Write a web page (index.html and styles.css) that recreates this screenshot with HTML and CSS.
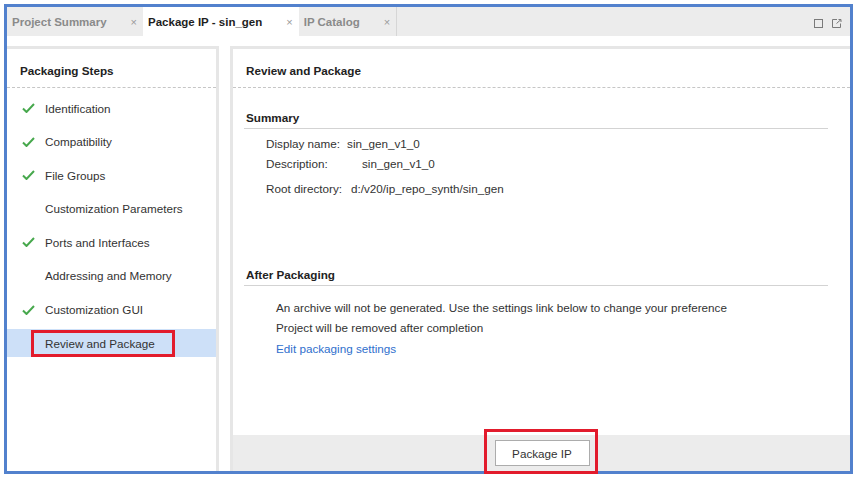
FILE: index.html
```html
<!DOCTYPE html>
<html lang="en">
<head>
    <meta charset="UTF-8">
    <meta name="viewport" content="width=device-width, initial-scale=1.0">
    <title>Package IP - sin_gen</title>
    <link rel="stylesheet" href="styles.css">
</head>
<body>
    <div class="frame">
        <div class="tabbar">
            <div class="tab">Project Summary<span class="close">×</span></div>
            <div class="tab active">Package IP - sin_gen<span class="close">×</span></div>
            <div class="tab last">IP Catalog<span class="close">×</span></div>
            <div class="tab-tools">
                <svg width="9" height="9" viewBox="0 0 9 9"><rect x="0.5" y="0.5" width="8" height="8" fill="none" stroke="#7a7a7a"/></svg>
                <svg width="10" height="9" viewBox="0 0 10 9"><path d="M5 0.5H0.5V8.5H8.5V4.5" fill="none" stroke="#7a7a7a"/><path d="M4.5 4.5L9 0.5M6.5 0.5H9V3" fill="none" stroke="#7a7a7a"/></svg>
            </div>
        </div>

        <div class="workspace">
            <div class="steps-panel">
                <div class="panel-title">Packaging Steps</div>
                <ul class="steps">
                    <li class="step"><span class="check"><svg width="13" height="10" viewBox="0 0 13 10"><polyline points="1,5.5 4.5,9 12,1" fill="none" stroke="#47a84d" stroke-width="2"/></svg></span><span>Identification</span></li>
                    <li class="step"><span class="check"><svg width="13" height="10" viewBox="0 0 13 10"><polyline points="1,5.5 4.5,9 12,1" fill="none" stroke="#47a84d" stroke-width="2"/></svg></span><span>Compatibility</span></li>
                    <li class="step"><span class="check"><svg width="13" height="10" viewBox="0 0 13 10"><polyline points="1,5.5 4.5,9 12,1" fill="none" stroke="#47a84d" stroke-width="2"/></svg></span><span>File Groups</span></li>
                    <li class="step"><span class="check"></span><span>Customization Parameters</span></li>
                    <li class="step"><span class="check"><svg width="13" height="10" viewBox="0 0 13 10"><polyline points="1,5.5 4.5,9 12,1" fill="none" stroke="#47a84d" stroke-width="2"/></svg></span><span>Ports and Interfaces</span></li>
                    <li class="step"><span class="check"></span><span>Addressing and Memory</span></li>
                    <li class="step"><span class="check"><svg width="13" height="10" viewBox="0 0 13 10"><polyline points="1,5.5 4.5,9 12,1" fill="none" stroke="#47a84d" stroke-width="2"/></svg></span><span>Customization GUI</span></li>
                    <li class="step current"><span class="check"></span><span class="callout step-callout">Review and Package</span></li>
                </ul>
            </div>

            <div class="review-panel">
                <div class="panel-title">Review and Package</div>
                <div class="review-body">
                    <div class="section">
                        <div class="section-title">Summary</div>
                        <div class="summary-rows">
                            <div class="row"><span>Display name:</span><span class="val-name">sin_gen_v1_0</span></div>
                            <div class="row"><span class="lbl-desc">Description:</span><span>sin_gen_v1_0</span></div>
                            <div class="row row-dir"><span>Root directory:</span><span class="val-dir">d:/v20/ip_repo_synth/sin_gen</span></div>
                        </div>
                    </div>
                    <div class="section after">
                        <div class="section-title">After Packaging</div>
                        <div class="after-rows">
                            <div class="row">An archive will not be generated. Use the settings link below to change your preference</div>
                            <div class="row">Project will be removed after completion</div>
                            <div class="row"><a href="#" class="link">Edit packaging settings</a></div>
                        </div>
                    </div>
                </div>
                <div class="review-footer">
                    <div class="callout btn-callout"><button class="btn">Package IP</button></div>
                </div>
            </div>
        </div>
    </div>
</body>
</html>
```

FILE: styles.css
```css
* {
    box-sizing: border-box;
}

body {
    margin: 0;
    font-family: 'Liberation Sans', Arial, sans-serif;
    font-size: 11.7px;
    color: #333;
    background: #fff;
}

.frame {
    margin: 4px 3px 0 4px;
    height: 470px;
    border: 3px solid #5281cd;
    display: flex;
    flex-direction: column;
}

/* tabs */
.tabbar {
    height: 29px;
    background: #ececec;
    display: flex;
    flex-shrink: 0;
}

.tab {
    display: flex;
    align-items: center;
    padding: 0 6px 0 5px;
    font-size: 11.5px;
    font-weight: bold;
    color: #8a8a8a;
}

.tab.active {
    background: #fff;
    color: #1e1e1e;
}

.tab.last {
    border-right: 1px solid #d6d6d6;
}

.tab .close {
    margin-left: 24px;
    font-weight: normal;
    font-size: 11px;
    color: #9a9a9a;
}

.tab-tools {
    margin-left: auto;
    display: flex;
    align-items: center;
    gap: 9px;
    padding: 3px 8px 0 0;
}

/* panels */
.workspace {
    flex: 1;
    display: flex;
    gap: 11px;
    padding-top: 10px;
    min-height: 0;
}

.steps-panel {
    width: 212px;
    border-top: 3px solid #e6e6e6;
    border-right: 3px solid #e6e6e6;
    display: flex;
    flex-direction: column;
}

.review-panel {
    flex: 1;
    border-top: 3px solid #e6e6e6;
    border-left: 3px solid #e6e6e6;
    display: flex;
    flex-direction: column;
}

.panel-title {
    height: 39px;
    padding: 4px 0 0 13px;
    display: flex;
    align-items: center;
    font-weight: bold;
    color: #222;
    border-bottom: 1px dashed #c6c6c6;
}

.steps {
    list-style: none;
    margin: 0;
    padding: 6px 0 0;
    display: flex;
    flex-direction: column;
    gap: 5.6px;
}

.step {
    height: 28px;
    display: flex;
    align-items: center;
    padding-left: 15px;
}

.step.current {
    background: #cde0f8;
}

.check {
    width: 13px;
    height: 10px;
    margin-right: 10px;
    display: flex;
}

.callout {
    position: relative;
}

.callout::after {
    content: '';
    position: absolute;
    border: 3px solid #e21b2c;
}

.step-callout::after {
    top: -7px;
    bottom: -7px;
    left: -14px;
    right: -20px;
}

/* review */
.review-body {
    flex: 1;
    padding: 0 22px 0 11px;
}

.section-title {
    padding: 23px 0 3px 2px;
    line-height: 14px;
    font-weight: bold;
    color: #222;
    border-bottom: 1px solid #d3d3d3;
}

.section.after .section-title {
    padding-top: 0;
    margin-top: 69px;
}

.summary-rows {
    padding: 5px 0 0 22px;
}

.row {
    line-height: 20px;
}

.row-dir {
    margin-top: 5px;
}

.val-name {
    margin-left: 7px;
}

.lbl-desc {
    display: inline-block;
    width: 96px;
}

.val-dir {
    margin-left: 9px;
}

.after-rows {
    padding: 12px 0 0 32px;
}

.after-rows .row:last-child {
    margin-top: 1px;
}

.link {
    color: #2f6fcd;
    text-decoration: none;
}

.review-footer {
    height: 36px;
    background: #ececec;
    display: flex;
    align-items: center;
    justify-content: center;
    padding-left: 1px;
}

.btn {
    display: block;
    width: 95px;
    height: 26px;
    background: #fff;
    border: 1px solid #acacac;
    font-family: inherit;
    font-size: 11.7px;
    color: #333;
}

.btn-callout::after {
    top: -11px;
    bottom: -8px;
    left: -11px;
    right: -8px;
}
```
